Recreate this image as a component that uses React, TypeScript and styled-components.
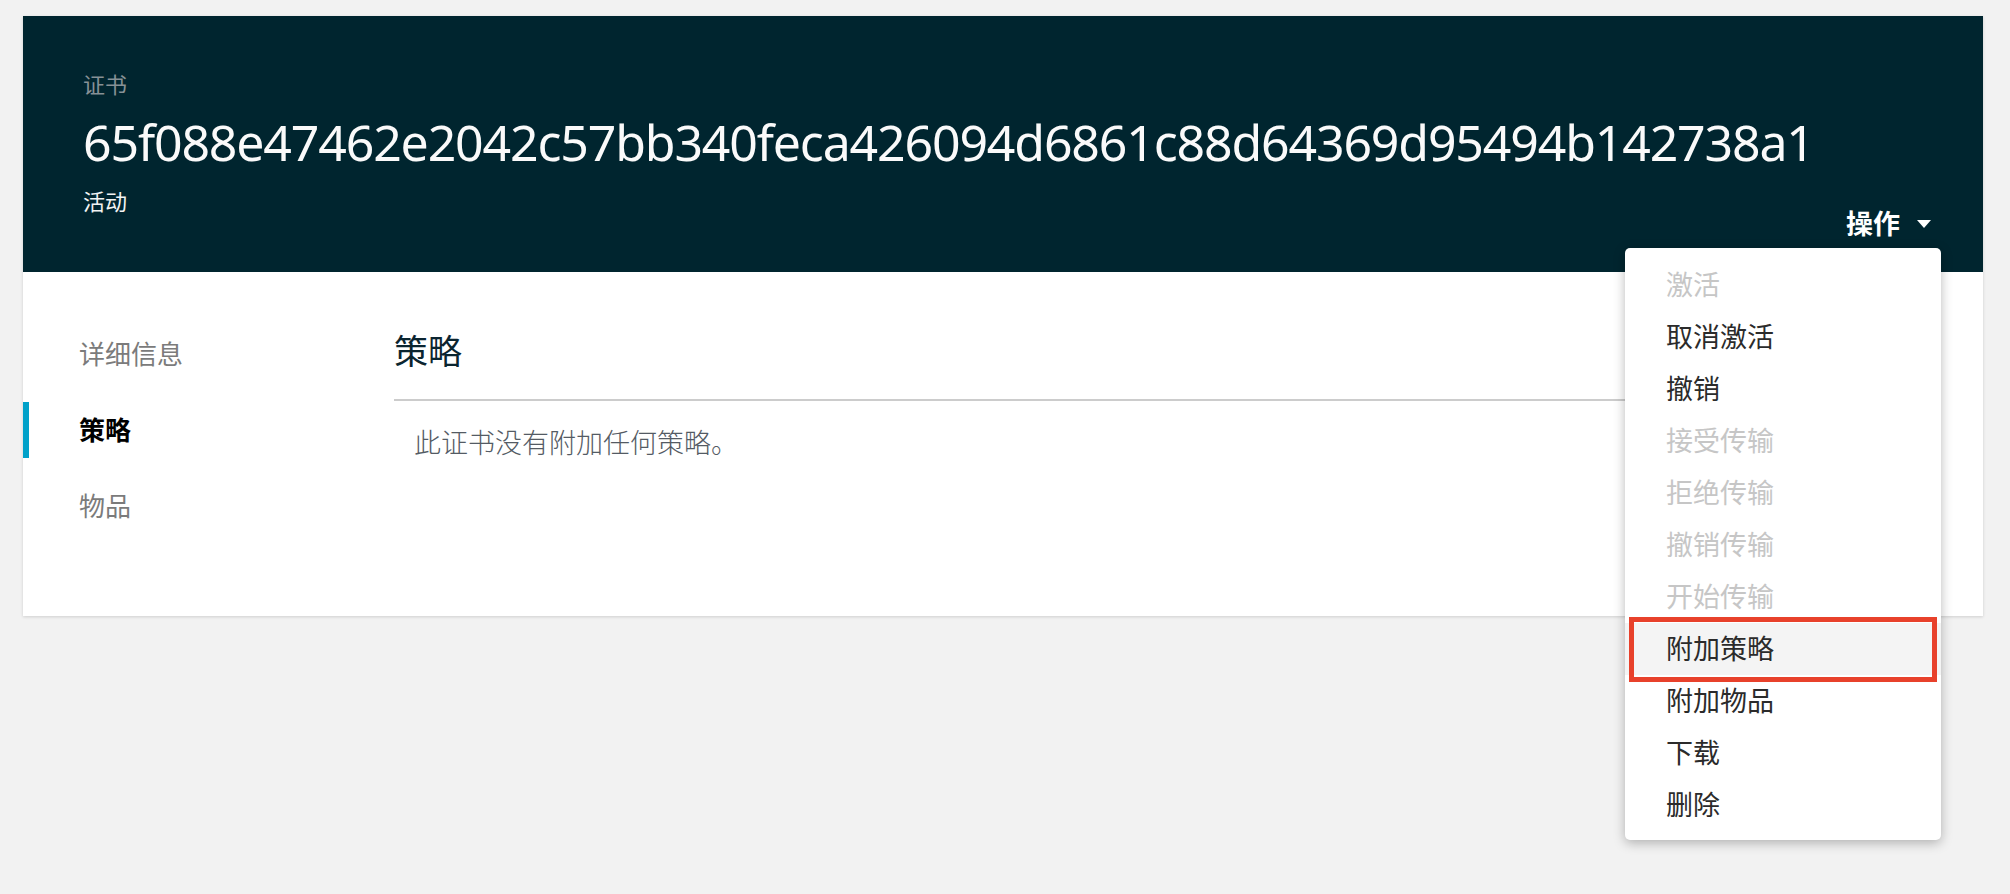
import React from "react";
import styled, { createGlobalStyle, css } from "styled-components";

const GlobalStyle = createGlobalStyle`
  html, body {
    margin: 0;
    padding: 0;
    background: #f2f2f2;
    font-family: "Noto Sans", "Noto Sans CJK SC", sans-serif;
  }
`;

const actions = [
  { label: "激活", disabled: true },
  { label: "取消激活" },
  { label: "撤销" },
  { label: "接受传输", disabled: true },
  { label: "拒绝传输", disabled: true },
  { label: "撤销传输", disabled: true },
  { label: "开始传输", disabled: true },
  { label: "附加策略", marked: true },
  { label: "附加物品" },
  { label: "下载" },
  { label: "删除" },
];

const tabs = [
  { label: "详细信息" },
  { label: "策略", active: true },
  { label: "物品" },
];

export default function App() {
  return (
    <>
      <GlobalStyle />
      <Page>
        <Card>
          <Header>
            <TitleBlock>
              <Eyebrow>证书</Eyebrow>
              <Title>65f088e47462e2042c57bb340feca426094d6861c88d64369d95494b142738a1</Title>
              <Status>活动</Status>
            </TitleBlock>
            <Actions>
              <ActionButton>
                操作
                <Caret />
              </ActionButton>
              <Menu>
                {actions.map((a) => (
                  <MenuItem key={a.label} $disabled={a.disabled} $marked={a.marked}>
                    {a.label}
                  </MenuItem>
                ))}
              </Menu>
            </Actions>
          </Header>
          <Body>
            <Nav>
              {tabs.map((t) => (
                <NavItem key={t.label} $active={t.active}>
                  {t.label}
                </NavItem>
              ))}
            </Nav>
            <Content>
              <SectionTitle>策略</SectionTitle>
              <EmptyText>此证书没有附加任何策略。</EmptyText>
            </Content>
          </Body>
        </Card>
      </Page>
    </>
  );
}

const Page = styled.div`
  min-height: 100vh;
  box-sizing: border-box;
  padding: 16px 27px 0 23px;
  background: #f2f2f2;
`;

const Card = styled.div`
  background: #fff;
  box-shadow: 0 1px 3px rgba(0, 0, 0, 0.15);
`;

const Header = styled.div`
  display: flex;
  justify-content: space-between;
  align-items: flex-end;
  box-sizing: border-box;
  height: 256px;
  padding: 53px 52px 30px 60px;
  background: #00252f;
`;

const TitleBlock = styled.div`
  align-self: flex-start;
  display: flex;
  flex-direction: column;
`;

const Eyebrow = styled.div`
  font-size: 22px;
  line-height: 30px;
  color: #879196;
`;

const Title = styled.div`
  margin-top: 13px;
  font-size: 50px;
  line-height: 60px;
  color: #fafafa;
  letter-spacing: -1.15px;
`;

const Status = styled.div`
  margin-top: 14px;
  font-size: 22px;
  line-height: 30px;
  color: #f2f3f3;
`;

const Actions = styled.div`
  position: relative;
`;

const ActionButton = styled.div`
  display: flex;
  align-items: center;
  gap: 17px;
  font-size: 27px;
  line-height: 36px;
  font-weight: 700;
  color: #fff;
  cursor: pointer;
`;

const Caret = styled.span`
  width: 0;
  height: 0;
  border-left: 7px solid transparent;
  border-right: 7px solid transparent;
  border-top: 8px solid #fff;
`;

const Menu = styled.div`
  position: absolute;
  top: calc(100% + 6px);
  right: -10px;
  width: 316px;
  padding: 11px 0 9px;
  background: #fff;
  border-radius: 5px;
  box-shadow: 0 3px 12px rgba(0, 0, 0, 0.28);
  z-index: 10;
`;

const MenuItem = styled.div<{ $disabled?: boolean; $marked?: boolean }>`
  position: relative;
  height: 52px;
  padding-left: 41px;
  font-size: 27px;
  line-height: 52px;
  color: ${(p) => (p.$disabled ? "#c6c6c6" : "#2b2b2b")};
  ${(p) =>
    p.$marked &&
    css`
      background: #f4f4f4;
      &::after {
        content: "";
        position: absolute;
        top: -6px;
        bottom: -7px;
        left: 4px;
        right: 4px;
        border: 5px solid #e8412b;
      }
    `}
`;

const Body = styled.div`
  display: flex;
  height: 344px;
`;

const Nav = styled.div`
  display: flex;
  flex-direction: column;
  gap: 20px;
  width: 371px;
  padding-top: 54px;
  flex-shrink: 0;
`;

const NavItem = styled.div<{ $active?: boolean }>`
  height: 56px;
  padding-left: 50px;
  border-left: 6px solid ${(p) => (p.$active ? "#00a1c9" : "transparent")};
  font-size: 26px;
  line-height: 56px;
  font-weight: ${(p) => (p.$active ? 700 : 400)};
  color: ${(p) => (p.$active ? "#000" : "#7b7b7b")};
`;

const Content = styled.div`
  flex: 1;
  padding: 57px 60px 0 0;
`;

const SectionTitle = styled.div`
  padding-bottom: 26px;
  border-bottom: 2px solid #cccccc;
  font-size: 34px;
  line-height: 44px;
  color: #0b2530;
`;

const EmptyText = styled.div`
  margin-top: 24px;
  padding-left: 20px;
  font-size: 27px;
  line-height: 36px;
  font-weight: 300;
  color: #545b64;
`;
